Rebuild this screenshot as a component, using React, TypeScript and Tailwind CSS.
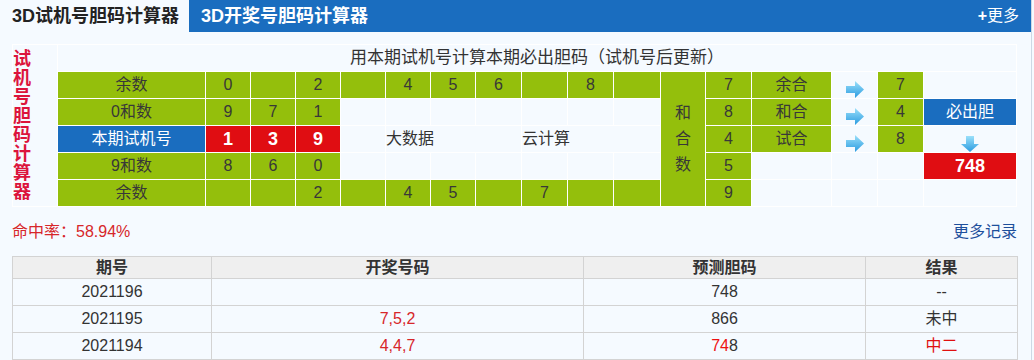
const green = 'bg-[#94bf0c] text-[#383838]';
const light = 'bg-[#f5faff] text-[#333]';

function RightArrow() {
  return (
    <svg width="18" height="17" viewBox="0 0 18 17">
      <defs>
        <linearGradient id="ra" x1="0" y1="0" x2="0" y2="1">
          <stop offset="0" stopColor="#9be0fa" />
          <stop offset="1" stopColor="#2a9be0" />
        </linearGradient>
      </defs>
      <path d="M0 5H9V0L18 8.5L9 17V12H0Z" fill="url(#ra)" />
    </svg>
  );
}

function DownArrow() {
  return (
    <svg width="18" height="16" viewBox="0 0 18 16">
      <defs>
        <linearGradient id="da" x1="0" y1="0" x2="0" y2="1">
          <stop offset="0" stopColor="#9be0fa" />
          <stop offset="1" stopColor="#2a9be0" />
        </linearGradient>
      </defs>
      <path d="M5 0H13V8H18L9 16L0 8H5Z" fill="url(#da)" />
    </svg>
  );
}

function Cell({ v, className = green }: { v?: string; className?: string }) {
  return <div className={`flex items-center justify-center text-[16px] ${className}`}>{v}</div>;
}

const row1 = ['0', '', '2', '', '4', '5', '6', '', '8', ''];
const row5 = ['', '', '2', '', '4', '5', '', '7', '', ''];

const history = [
  { issue: '2021196', draw: '', pick: ['748', ''], result: '--', hit: false },
  { issue: '2021195', draw: '7,5,2', pick: ['866', ''], result: '未中', hit: false },
  { issue: '2021194', draw: '4,4,7', pick: ['8', '74'], result: '中二', hit: true },
];

export default function App() {
  return (
    <div className="w-[1034px] h-[360px] bg-[#f5faff] font-['Liberation_Sans','Noto_Sans_CJK_SC',sans-serif] overflow-hidden">
      <div className="w-[1032px] h-full border-r border-[#cdd8e4]">
        {/* Tabs */}
        <div className="flex h-[32px]">
          <div className="w-[189px] flex items-center pl-[12px] text-[18px] font-bold text-[#222]">3D试机号胆码计算器</div>
          <div className="flex-1 flex items-center justify-between bg-[#1a6dbf] pl-[12px] pr-[12px] text-white">
            <span className="text-[18px] font-bold">3D开奖号胆码计算器</span>
            <span className="text-[16px]"><b>+</b>更多</span>
          </div>
        </div>

        <div className="px-[12px] pt-[12px]">
          {/* Calculator grid */}
          <div className="grid w-fit gap-px bg-white p-px grid-cols-[44px_147px_44px_44px_44px_44px_44px_44px_45px_45px_45px_46px_44px_45px_79px_45px_45px_92px] grid-rows-[26px_26px_26px_26px_26px_26px]">
            <div className="row-span-6 bg-[#f5faff] flex items-center">
              <div className="w-[18px] text-[18px] leading-[19px] font-bold text-[#dc143c] text-center">
                试机号胆码计算器
              </div>
            </div>
            <div className="col-span-17 bg-[#f5faff] flex items-center justify-center text-[17px] text-[#333]">
              用本期试机号计算本期必出胆码（试机号后更新）
            </div>

            {/* row 1 */}
            <Cell v="余数" />
            {row1.map((d, i) => <Cell key={i} v={d} />)}
            <div className={`row-span-5 flex items-center justify-center text-[16px] leading-[26px] text-center ${green}`}>
              <div className="w-[16px]">和合数</div>
            </div>
            <Cell v="7" />
            <Cell v="余合" />
            <div className="flex items-end justify-center bg-[#f5faff]"><RightArrow /></div>
            <Cell v="7" />
            <Cell className={light} />

            {/* row 2 */}
            <Cell v="0和数" />
            <Cell v="9" />
            <Cell v="7" />
            <Cell v="1" />
            {Array.from({ length: 7 }).map((_, i) => <Cell key={i} className={light} />)}
            <Cell v="8" />
            <Cell v="和合" />
            <div className="flex items-end justify-center bg-[#f5faff]"><RightArrow /></div>
            <Cell v="4" />
            <Cell v="必出胆" className="bg-[#1a6dbf] text-white" />

            {/* row 3 */}
            <Cell v="本期试机号" className="bg-[#1a6dbf] text-white" />
            {['1', '3', '9'].map((d) => (
              <div key={d} className="flex items-center justify-center bg-[#e00d12] text-white text-[18px] font-bold">{d}</div>
            ))}
            <Cell className={light} />
            <div className={`col-span-3 flex items-center text-[16px] ${light}`}>大数据</div>
            <div className={`col-span-3 flex items-center text-[16px] ${light}`}>云计算</div>
            <Cell v="4" />
            <Cell v="试合" />
            <div className="flex items-end justify-center bg-[#f5faff]"><RightArrow /></div>
            <Cell v="8" />
            <div className="flex items-end justify-center bg-[#f5faff]"><DownArrow /></div>

            {/* row 4 */}
            <Cell v="9和数" />
            <Cell v="8" />
            <Cell v="6" />
            <Cell v="0" />
            {Array.from({ length: 7 }).map((_, i) => <Cell key={i} className={light} />)}
            <Cell v="5" />
            <Cell className={light} />
            <Cell className={light} />
            <Cell className={light} />
            <div className="flex items-center justify-center bg-[#e00d12] text-white text-[18px] font-bold">748</div>

            {/* row 5 */}
            <Cell v="余数" />
            {row5.map((d, i) => <Cell key={i} v={d} />)}
            <Cell v="9" />
            <Cell className={light} />
            <Cell className={light} />
            <Cell className={light} />
            <Cell className={light} />
          </div>

          {/* Hit rate */}
          <div className="flex items-center justify-between h-[49px] w-[1005px] text-[16px]">
            <span className="text-[#d7262a]">命中率：58.94%</span>
            <span className="text-[#1d4f9c]">更多记录</span>
          </div>

          {/* History */}
          <table className="w-[1005px] table-fixed border-collapse text-[16px] text-[#333]">
            <colgroup>
              <col className="w-[199px]" />
              <col className="w-[372px]" />
              <col className="w-[282px]" />
              <col className="w-[152px]" />
            </colgroup>
            <thead>
              <tr className="h-[22px] bg-[#efefef]">
                {['期号', '开奖号码', '预测胆码', '结果'].map((h) => (
                  <th key={h} className="border border-[#d3d3d3] p-0 font-bold text-[#333] leading-[20px]">{h}</th>
                ))}
              </tr>
            </thead>
            <tbody>
              {history.map((r) => (
                <tr key={r.issue} className="h-[27px]">
                  <td className="border border-[#d3d3d3] p-0 text-center">{r.issue}</td>
                  <td className="border border-[#d3d3d3] p-0 text-center text-[#d7262a]">{r.draw}</td>
                  <td className="border border-[#d3d3d3] p-0 text-center">
                    {r.pick[1] ? (
                      <><span className="text-[#ee1111]">{r.pick[1]}</span>{r.pick[0]}</>
                    ) : r.pick[0]}
                  </td>
                  <td className={`border border-[#d3d3d3] p-0 text-center ${r.hit ? 'text-[#e01010]' : ''}`}>{r.result}</td>
                </tr>
              ))}
            </tbody>
          </table>
        </div>
      </div>
    </div>
  );
}
